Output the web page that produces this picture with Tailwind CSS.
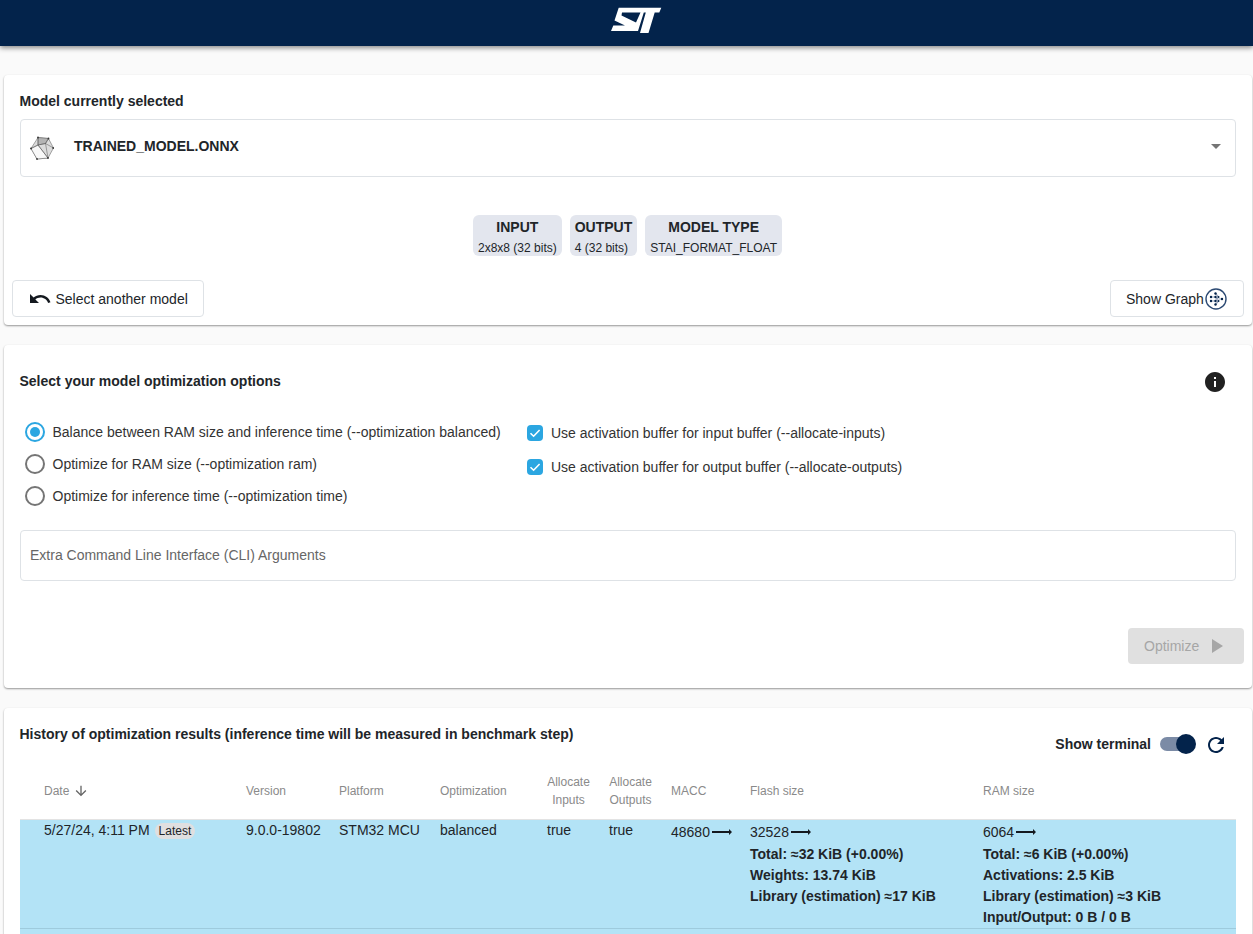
<!DOCTYPE html>
<html lang="en">
<head>
    <meta charset="UTF-8">
    <title>Model optimization</title>
    <script src="https://cdn.jsdelivr.net/npm/@tailwindcss/browser@4"></script>
</head>
<body class="h-[934px] overflow-hidden bg-[#fafafa] font-['Liberation_Sans',Arial,sans-serif] text-sm text-[#212529]">
    <!-- Top bar -->
    <header class="relative z-10 flex h-[46px] justify-center bg-[#03234b] pl-[19px] shadow-[0_2px_5px_rgba(0,0,0,0.45)]">
        <svg class="mt-[6px] h-[28px] w-[51px]" viewBox="0 0 51 28" fill="#ffffff" fill-rule="evenodd">
            <path d="M7.7 1.7H50.3L48.3 6.5H43.7L37.5 27H29L34.8 6.5H32.8L27 25H0L2.3 19.5H14L3.5 14.5ZM11 6.5H29.5L25 16.5L10.5 9.5Z"/>
        </svg>
    </header>

    <main class="ml-1 mr-px mt-[29px] flex flex-col gap-5">
        <!-- Selected model -->
        <section class="h-[250px] rounded bg-white px-2 pt-4 shadow-[0_1px_2px_rgba(0,0,0,0.4)]">
            <div class="px-2">
                <h2 class="-ml-[0.5px] text-sm leading-5 font-bold">Model currently selected</h2>
                <div class="mt-2 flex h-[58px] items-center justify-between rounded border border-[#dee2e6] pl-[9px] pr-[7px]">
                    <div class="flex items-center gap-[20px]">
                        <svg class="h-[24px] w-[24px]" viewBox="0 0 24 24" stroke="#555555" stroke-width="0.5" fill="#dcdcdc">
                            <path d="M8 1.5 18.5 2.5 23.5 12 18 22 7 23 1 12.5Z"/>
                            <path fill="#f8f8f8" d="M8 9 18 22 7 23 1 12.5Z"/>
                            <path fill="#b4b4b4" d="M8 1.5 18.5 2.5 15.5 7.5 8 9Z"/>
                            <path fill="none" d="M8 1.5V9L1 12.5M8 9 15.5 7.5 23.5 12M15.5 7.5 18 22M18.5 2.5 15.5 7.5M8 9 18 22"/>
                            <g fill="#333333" stroke="none">
                                <circle cx="8" cy="1.5" r="0.9"/><circle cx="18.5" cy="2.5" r="0.9"/><circle cx="23.2" cy="12" r="0.9"/>
                                <circle cx="18" cy="22" r="0.9"/><circle cx="7" cy="23" r="0.9"/><circle cx="1" cy="12.5" r="0.9"/>
                            </g>
                        </svg>
                        <span class="-mt-1 font-bold">TRAINED_MODEL.ONNX</span>
                    </div>
                    <svg class="mb-1 h-6 w-6" viewBox="0 0 24 24" fill="#757575"><path d="M7 10l5 5 5-5z"/></svg>
                </div>
                <div class="mt-[38px] flex h-[41px] justify-center gap-2 pr-px text-center">
                    <div class="rounded-md bg-[#e3e6ee] px-[5px] pt-1">
                        <div class="text-sm leading-[17px] font-bold">INPUT</div>
                        <div class="mt-1 text-xs leading-[16px]">2x8x8 (32 bits)</div>
                    </div>
                    <div class="rounded-md bg-[#e3e6ee] px-[5px] pt-1">
                        <div class="text-sm leading-[17px] font-bold">OUTPUT</div>
                        <div class="mt-1 text-left text-xs leading-[16px]">4 (32 bits)</div>
                    </div>
                    <div class="rounded-md bg-[#e3e6ee] px-[5px] pt-1">
                        <div class="text-sm leading-[17px] font-bold">MODEL TYPE</div>
                        <div class="mt-1 text-xs leading-[16px]">STAI_FORMAT_FLOAT</div>
                    </div>
                </div>
            </div>
            <div class="mt-6 flex justify-between">
                <button class="flex h-[37px] w-[192px] items-center rounded border border-[#dee2e6] pl-[15px]">
                    <svg class="mr-[3.5px] h-6 w-6 shrink-0" viewBox="0 0 24 24" fill="#14191f"><path d="M12.5 8c-2.65 0-5.05.99-6.9 2.6L2 7v9h9l-3.62-3.62c1.39-1.16 3.16-1.88 5.12-1.88 3.54 0 6.55 2.31 7.6 5.5l2.37-.78C21.08 11.03 17.15 8 12.5 8z"/></svg>
                    Select another model
                </button>
                <button class="flex h-[37px] w-[134px] items-center rounded border border-[#dee2e6] pl-[15px]">
                    Show Graph
                    <svg class="ml-px h-[22px] w-[22px]" viewBox="0 0 22 22" fill="#03234b">
                        <circle cx="11" cy="11" r="10" fill="none" stroke="#2c4a73" stroke-width="1.4"/>
                        <path d="M10.5 5.5 13.5 9M10.5 9 13.5 13M10.5 13 13.5 9M10.5 16.5 13.5 13M6 9 10.5 9M6 13 10.5 13M13.5 11H17" stroke="#9aa7bc" stroke-width="1.2" fill="none"/>
                        <circle cx="6" cy="9" r="1.2"/><circle cx="6" cy="13" r="1.2"/>
                        <circle cx="10.5" cy="5.5" r="1.2"/><circle cx="10.5" cy="9" r="1.2"/><circle cx="10.5" cy="13" r="1.2"/><circle cx="10.5" cy="16.5" r="1.2"/>
                        <circle cx="13.5" cy="9" r="1"/><circle cx="13.5" cy="13" r="1"/>
                        <circle cx="17" cy="11" r="1.2"/>
                    </svg>
                </button>
            </div>
        </section>

        <!-- Optimization options -->
        <section class="h-[343px] rounded bg-white px-4 pt-[26px] shadow-[0_1px_2px_rgba(0,0,0,0.4)]">
            <div class="flex h-5 items-center justify-between">
                <h2 class="-ml-[0.5px] text-sm leading-5 font-bold">Select your model optimization options</h2>
                <svg class="mr-[9px] mt-[2px] h-6 w-6" viewBox="0 0 24 24" fill="#212121"><path d="M12 2C6.48 2 2 6.48 2 12s4.48 10 10 10 10-4.48 10-10S17.52 2 12 2zm1 15h-2v-6h2v6zm0-8h-2V7h2v2z"/></svg>
            </div>
            <div class="mt-[25px] flex">
                <div class="w-[507px] pl-[5px]">
                    <label class="flex h-8 items-center gap-[7.5px] text-[#333]">
                        <span class="flex h-5 w-5 items-center justify-center rounded-full border-2 border-[#2ba6e1]"><span class="h-[10px] w-[10px] rounded-full bg-[#2ba6e1]"></span></span>
                        Balance between RAM size and inference time (--optimization balanced)
                    </label>
                    <label class="flex h-8 items-center gap-[7.5px] text-[#333]">
                        <span class="h-5 w-5 rounded-full border-2 border-[#757575]"></span>
                        Optimize for RAM size (--optimization ram)
                    </label>
                    <label class="flex h-8 items-center gap-[7.5px] text-[#333]">
                        <span class="h-5 w-5 rounded-full border-2 border-[#757575]"></span>
                        Optimize for inference time (--optimization time)
                    </label>
                </div>
                <div>
                    <label class="flex h-[34px] items-center gap-2 text-[#333]">
                        <svg class="h-4 w-4 rounded-sm bg-[#2ba6e1]" viewBox="0 0 16 16" fill="none" stroke="#ffffff" stroke-width="1.6"><path d="M3.5 8.2 6.6 11.2 12.6 5"/></svg>
                        Use activation buffer for input buffer (--allocate-inputs)
                    </label>
                    <label class="flex h-[34px] items-center gap-2 text-[#333]">
                        <svg class="h-4 w-4 rounded-sm bg-[#2ba6e1]" viewBox="0 0 16 16" fill="none" stroke="#ffffff" stroke-width="1.6"><path d="M3.5 8.2 6.6 11.2 12.6 5"/></svg>
                        Use activation buffer for output buffer (--allocate-outputs)
                    </label>
                </div>
            </div>
            <div class="mt-[18px] flex h-[51px] items-center rounded border border-[#dee2e6] pb-[2px] pl-[9px] text-[#666]">
                Extra Command Line Interface (CLI) Arguments
            </div>
            <div class="mt-[47px] -mr-2 flex justify-end">
                <button class="flex h-9 w-[116px] items-center rounded bg-[#e0e0e0] pl-4 text-[#a6a6a6]">
                    Optimize
                    <svg class="ml-[5px] h-6 w-6" viewBox="0 0 24 24" fill="#a6a6a6"><path d="M8 5v14l11-7z"/></svg>
                </button>
            </div>
        </section>

        <!-- History table -->
        <section class="rounded bg-white pt-[15px] pb-4 shadow-[0_1px_2px_rgba(0,0,0,0.4)]">
            <div class="flex items-start justify-between pl-4 pr-6">
                <h2 class="-ml-[0.5px] mt-px text-sm leading-5 font-bold">History of optimization results (inference time will be measured in benchmark step)</h2>
                <div class="mt-[11px] flex h-5 items-center">
                    <span class="font-bold">Show terminal</span>
                    <span class="relative ml-[9px] h-[14px] w-[30px] rounded-full bg-[#7b8ba6]">
                        <span class="absolute top-[-3px] left-4 h-5 w-5 rounded-full bg-[#03234b]"></span>
                    </span>
                    <svg class="ml-[14px] mt-[2px] h-6 w-6" viewBox="0 0 24 24" fill="#03234b"><path d="M17.65 6.35C16.2 4.9 14.21 4 12 4c-4.42 0-7.99 3.58-7.99 8s3.57 8 7.99 8c3.73 0 6.84-2.55 7.73-6h-2.08c-.82 2.33-3.04 4-5.65 4-3.31 0-6-2.69-6-6s2.69-6 6-6c1.66 0 3.14.69 4.22 1.78L13 11h7V4l-2.35 2.35z"/></svg>
                </div>
            </div>
            <div class="mt-4 px-4">
                <table class="w-[1216px] table-fixed border-collapse text-left">
                    <thead>
                        <tr class="h-[49px] border-b border-[#e3e3e3] text-xs leading-[18px] text-[#8a8a8a]">
                            <th class="w-[226px] pb-[7px] pl-6 font-normal">
                                <span class="flex items-center gap-[4px]">Date
                                    <svg class="h-4 w-4" viewBox="0 0 24 24" fill="#666666"><path d="M20 12l-1.41-1.41L13 16.17V4h-2v12.17l-5.58-5.6L4 12l8 8 8-8z"/></svg>
                                </span>
                            </th>
                            <th class="w-[93px] pb-[7px] font-normal">Version</th>
                            <th class="w-[101px] pb-[7px] font-normal">Platform</th>
                            <th class="w-[107px] pb-[7px] font-normal">Optimization</th>
                            <th class="w-[62px] pb-[7px] font-normal"><span class="block w-[43px] text-center">Allocate Inputs</span></th>
                            <th class="w-[62px] pb-[7px] font-normal"><span class="block w-[43px] text-center">Allocate Outputs</span></th>
                            <th class="w-[79px] pb-[7px] font-normal">MACC</th>
                            <th class="w-[233px] pb-[7px] font-normal">Flash size</th>
                            <th class="w-[253px] pb-[7px] font-normal">RAM size</th>
                        </tr>
                    </thead>
                    <tbody>
                        <tr class="h-[109px] border-b border-[#9ecbdd] bg-[#b3e3f6] align-top">
                            <td class="pt-[2px] pl-6 leading-[17px]">5/27/24, 4:11 PM<span class="ml-[5px] inline-block h-4 rounded-lg bg-[#e0dfe0] px-1 text-xs leading-4">Latest</span></td>
                            <td class="pt-[2px] leading-[17px]">9.0.0-19802</td>
                            <td class="pt-[2px] leading-[17px]">STM32 MCU</td>
                            <td class="pt-[2px] leading-[17px]">balanced</td>
                            <td class="pt-[2px] leading-[17px]">true</td>
                            <td class="pt-[2px] leading-[17px]">true</td>
                            <td>
                                <span class="flex h-6 items-center">48680<svg class="h-6 w-6" viewBox="0 0 24 24" fill="#14191f"><path d="M22 12l-3-3v2H2v2h17v2z"/></svg></span>
                            </td>
                            <td>
                                <span class="flex h-6 items-center">32528<svg class="h-6 w-6" viewBox="0 0 24 24" fill="#14191f"><path d="M22 12l-3-3v2H2v2h17v2z"/></svg></span>
                                <div class="font-bold leading-[21px]">
                                    <div>Total: ≈32 KiB (+0.00%)</div>
                                    <div>Weights: 13.74 KiB</div>
                                    <div>Library (estimation) ≈17 KiB</div>
                                </div>
                            </td>
                            <td>
                                <span class="flex h-6 items-center">6064<svg class="h-6 w-6" viewBox="0 0 24 24" fill="#14191f"><path d="M22 12l-3-3v2H2v2h17v2z"/></svg></span>
                                <div class="font-bold leading-[21px]">
                                    <div>Total: ≈6 KiB (+0.00%)</div>
                                    <div>Activations: 2.5 KiB</div>
                                    <div>Library (estimation) ≈3 KiB</div>
                                    <div>Input/Output: 0 B / 0 B</div>
                                </div>
                            </td>
                        </tr>
                        <tr class="h-8 bg-[#b3e3f6]"><td colspan="9"></td></tr>
                    </tbody>
                </table>
            </div>
        </section>
    </main>
</body>
</html>
